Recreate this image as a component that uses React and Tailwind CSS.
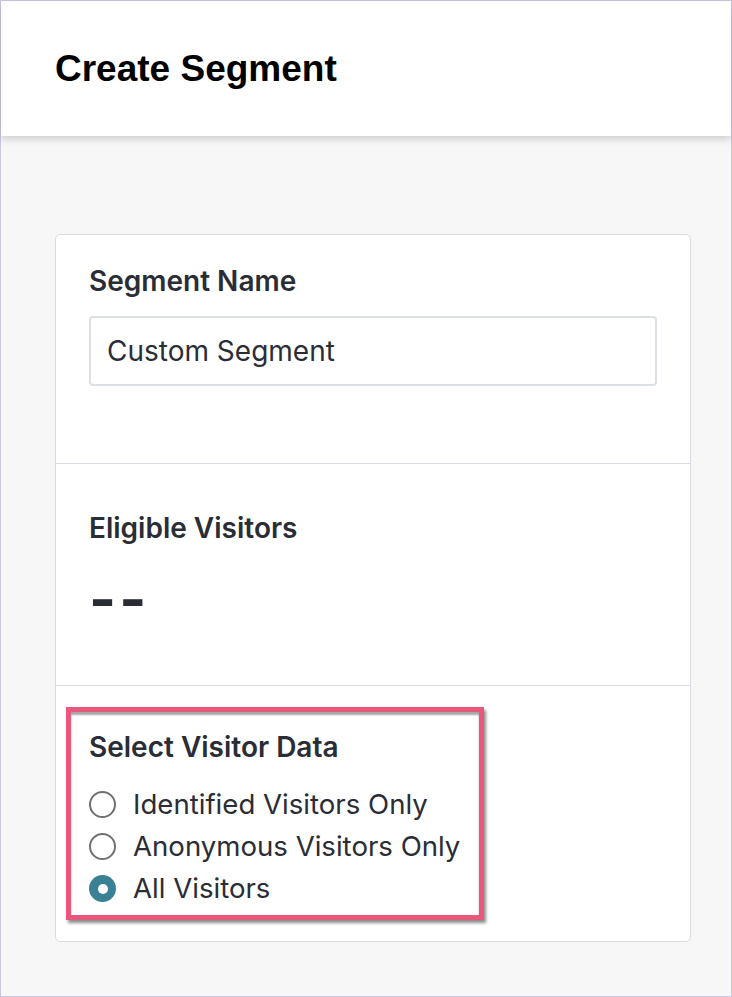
import React from 'react';

const OPTIONS = [
  { label: 'Identified Visitors Only', checked: false },
  { label: 'Anonymous Visitors Only', checked: false },
  { label: 'All Visitors', checked: true },
];

function Radio({ checked }) {
  if (checked) {
    return (
      <span className="flex h-[27px] w-[27px] shrink-0 items-center justify-center rounded-full bg-[#3b8196]">
        <span className="h-[10px] w-[10px] rounded-full bg-white" />
      </span>
    );
  }
  return <span className="h-[27px] w-[27px] shrink-0 rounded-full border-2 border-[#707070] bg-white" />;
}

export default function App() {
  return (
    <div className="flex h-[997px] w-[732px] flex-col border border-[#cbc7e3] bg-[#f7f7f7] font-['Inter',sans-serif] text-[#2a2d36]">
      <header className="relative z-10 flex h-[135px] shrink-0 items-center bg-white px-[54px] shadow-[0_3px_8px_rgba(0,0,0,0.18)]">
        <h1 className="font-['Liberation_Sans',Arial,sans-serif] text-[37px] font-bold text-black">Create Segment</h1>
      </header>

      <div className="ml-[54px] mt-[98px] w-[636px] rounded-[5px] border border-[#d9dce1] bg-white">
        {/* name */}
        <section className="h-[229px] border-b border-[#d9dce1] px-[33px] pt-[29px]">
          <h2 className="text-[28px] font-semibold leading-[34px]">Segment Name</h2>
          <div className="mt-[18px] flex h-[70px] items-center rounded-[4px] border-2 border-[#dcdfe4] px-[16px] text-[28px] text-[#2a2d36]">
            Custom Segment
          </div>
        </section>

        {/* eligible */}
        <section className="h-[222px] border-b border-[#d9dce1] px-[33px] pt-[47px]">
          <h2 className="text-[28px] font-semibold leading-[34px]">Eligible Visitors</h2>
          <p className="mt-[24px] text-[58px] font-bold leading-[60px] tracking-[3px]">--</p>
        </section>

        {/* visitor data */}
        <section className="h-[255px] px-[10px] pt-[21px]">
          <div className="h-[213px] w-[418px] border-[5px] border-[#e8587d] pl-[18px] pt-[18px] shadow-[2px_3px_3px_rgba(0,0,0,0.45),inset_0_3px_2px_rgba(0,0,0,0.35)]">
            <h2 className="text-[28px] font-semibold leading-[34px]">Select Visitor Data</h2>
            <div className="mt-[27px] flex flex-col gap-[15px]">
              {OPTIONS.map((o) => (
                <label key={o.label} className="flex h-[27px] items-center gap-[17px] text-[27.6px] leading-[27px]">
                  <Radio checked={o.checked} />
                  <span>{o.label}</span>
                </label>
              ))}
            </div>
          </div>
        </section>
      </div>
    </div>
  );
}
